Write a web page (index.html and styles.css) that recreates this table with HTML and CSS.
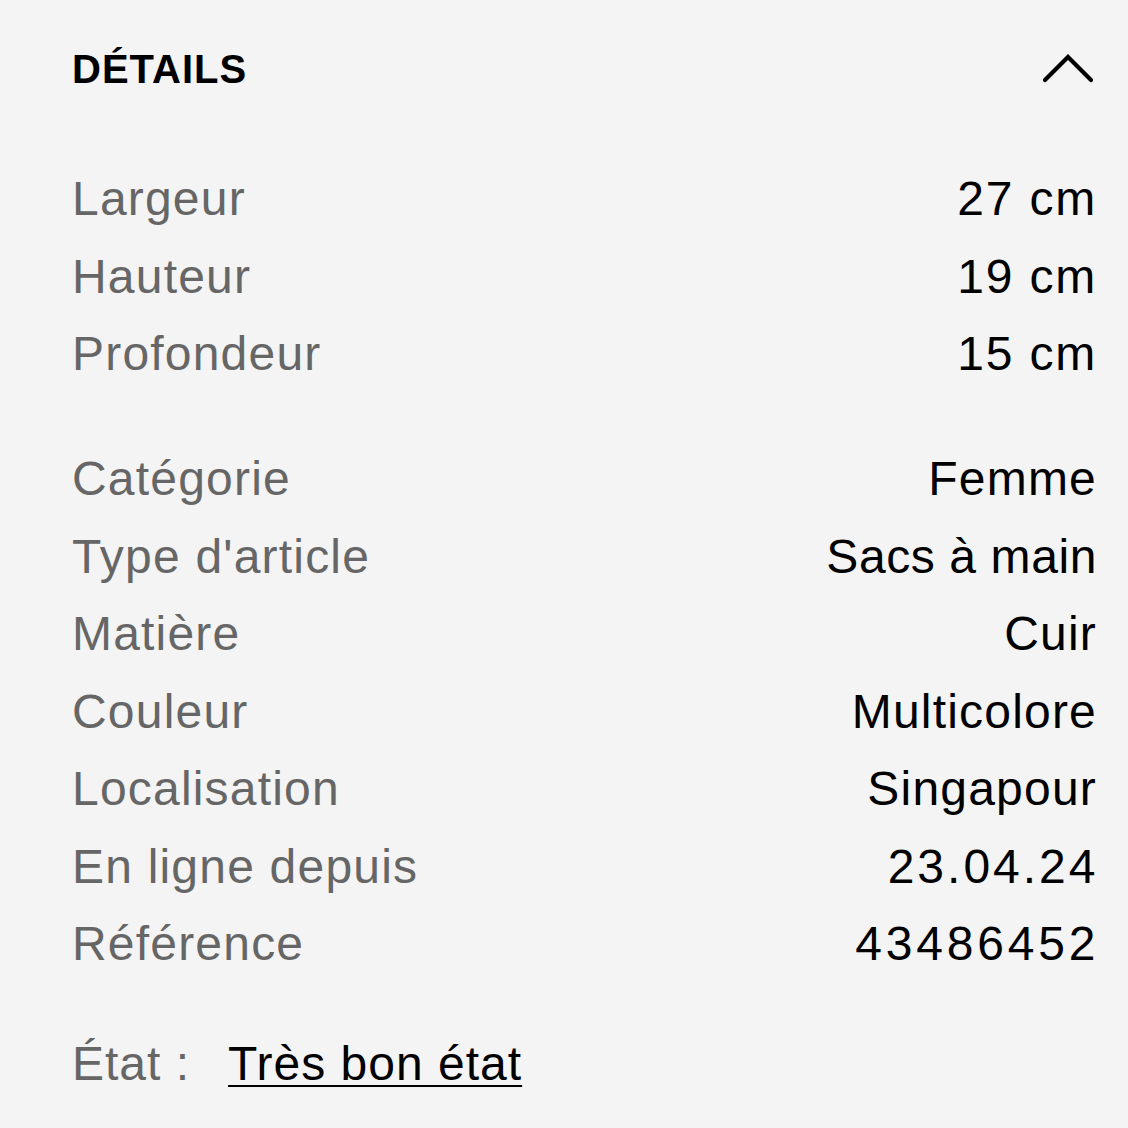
FILE: index.html
```html
<!DOCTYPE html>
<html lang="fr">
<head>
<meta charset="utf-8">
<link rel="stylesheet" href="styles.css">
</head>
<body>
<section class="panel">
  <header class="head">
    <h2 class="title">DÉTAILS</h2>
    <svg class="chevron" width="52" height="32" viewBox="0 0 52 32" aria-hidden="true">
      <polyline points="3,28 26,5 49,28" fill="none" stroke="#000" stroke-width="4.2" stroke-linecap="round" stroke-linejoin="miter"/>
    </svg>
  </header>
  <dl class="group first">
    <div class="row"><dt>Largeur</dt><dd class="num-short">27 cm</dd></div>
    <div class="row"><dt>Hauteur</dt><dd class="num-short">19 cm</dd></div>
    <div class="row"><dt>Profondeur</dt><dd class="num-short">15 cm</dd></div>
  </dl>
  <dl class="group second">
    <div class="row"><dt>Catégorie</dt><dd>Femme</dd></div>
    <div class="row"><dt>Type d'article</dt><dd class="tight">Sacs à main</dd></div>
    <div class="row"><dt>Matière</dt><dd>Cuir</dd></div>
    <div class="row"><dt>Couleur</dt><dd>Multicolore</dd></div>
    <div class="row"><dt>Localisation</dt><dd>Singapour</dd></div>
    <div class="row"><dt>En ligne depuis</dt><dd class="num">23.04.24</dd></div>
    <div class="row"><dt>Référence</dt><dd class="num wide">43486452</dd></div>
  </dl>
  <p class="state"><span class="state-label">État :</span><a class="state-link" href="#">Très bon état</a></p>
</section>
</body>
</html>
```
FILE: styles.css
```css
html, body {
  margin: 0;
  padding: 0;
  background: #f4f4f4;
}
body {
  font-family: "Liberation Sans", Arial, sans-serif;
  color: #000;
}
.panel {
  padding: 45px 32px 0 72px;
}
.head {
  display: flex;
  justify-content: space-between;
  align-items: center;
  height: 46px;
}
.title {
  margin: 0;
  font-size: 40px;
  line-height: 46px;
  font-weight: 700;
  letter-spacing: 1px;
  color: #000;
  position: relative;
  top: 1px;
}
.chevron {
  display: block;
  margin-right: 2px;
}
.group {
  margin: 0;
  padding: 0;
}
.group.first {
  margin-top: 69px;
}
.group.second {
  margin-top: 47.5px;
}
.row {
  display: flex;
  justify-content: space-between;
  align-items: baseline;
  height: 77.5px;
  line-height: 77.5px;
  font-size: 48px;
  letter-spacing: 1.2px;
}
.row dt {
  color: #666;
  margin: 0;
}
.row dd {
  margin: 0 -1px 0 0;
  color: #000;
  text-align: right;
}
.row dd.num {
  letter-spacing: 3px;
  margin-right: -2.5px;
}
.row dd.num.wide {
  letter-spacing: 3.8px;
  margin-right: -3.3px;
}
.row dd.num-short {
  letter-spacing: 1.8px;
}
.row dd.tight {
  letter-spacing: 0.6px;
}
.state {
  margin: 42.6px 0 0;
  font-size: 48px;
  line-height: 77.5px;
  letter-spacing: 1px;
}
.state-label {
  color: #666;
  margin-right: 38px;
}
.state-link {
  color: #000;
  text-decoration: underline;
  text-decoration-thickness: 2px;
  text-underline-offset: 5px;
}
```
